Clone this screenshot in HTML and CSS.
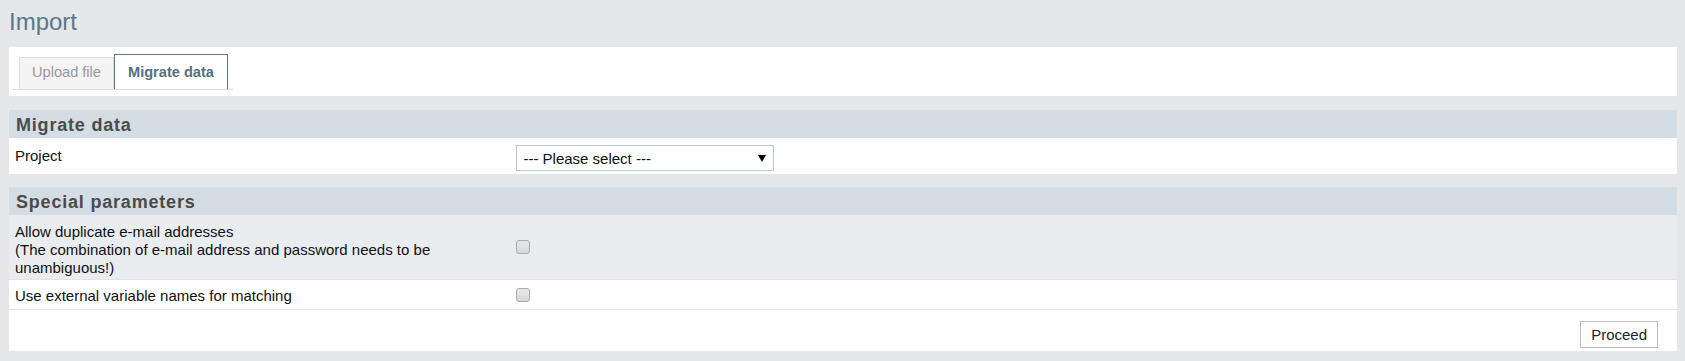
FILE: index.html
```html
<!DOCTYPE html>
<html lang="en">
<head>
<meta charset="utf-8">
<title>Import</title>
<link rel="stylesheet" href="styles.css">
</head>
<body>
<h1 class="page-title">Import</h1>

<div class="tab-panel">
  <div class="tab-list">
    <a class="tab">Upload file</a>
    <a class="tab tab-active">Migrate data</a>
  </div>
</div>

<section class="section">
  <h2 class="section-head">Migrate data</h2>
  <div class="row row-project">
    <div class="label">Project</div>
    <div class="value value-select">
      <span class="select-wrap">
        <select class="select">
          <option>--- Please select ---</option>
        </select>
      </span>
    </div>
  </div>
</section>

<section class="section section-special">
  <h2 class="section-head">Special parameters</h2>
  <div class="row row-dup">
    <div class="label label-multi">Allow duplicate e-mail addresses<br>(The combination of e-mail address and password needs to be unambiguous!)</div>
    <div class="value"><input type="checkbox" class="check"></div>
  </div>
  <div class="row row-ext">
    <div class="label label-single">Use external variable names for matching</div>
    <div class="value"><input type="checkbox" class="check"></div>
  </div>
  <div class="actions">
    <button class="button">Proceed</button>
  </div>
</section>
</body>
</html>
```

FILE: styles.css
```css
html, body {
  margin: 0;
  padding: 0;
}

body {
  background: #e6e7e9;
  padding: 8px 8px 0 9px;
  font-family: "Liberation Sans", Arial, sans-serif;
  font-size: 15px;
  color: #111;
}

.page-title {
  margin: 0;
  font-size: 24px;
  line-height: 28px;
  font-weight: normal;
  color: #5b7889;
}

.tab-panel {
  margin-top: 11px;
  background: #fff;
  padding: 7px 0 6px 3px;
}

.tab-list {
  display: inline-flex;
  align-items: flex-end;
  border-bottom: 1px solid #dddddd;
  padding: 0 5px 0 7px;
}

.tab {
  display: block;
  font-size: 14.6px;
  line-height: 18px;
  padding: 5px 12px 8px;
  background: #f4f4f4;
  border: 1px solid #dddddd;
  border-bottom: none;
  color: #999;
  cursor: pointer;
}

.tab-active {
  padding: 8px 13px 8px;
  background: #fff;
  border-color: #5b7b8d;
  color: #56707f;
  font-weight: bold;
}

.section {
  margin-top: 14px;
  background: #fff;
}

.section-special {
  margin-top: 13px;
}

.section-head {
  margin: 0;
  height: 28px;
  box-sizing: border-box;
  padding: 2px 7px 0;
  line-height: 26px;
  font-size: 18px;
  font-weight: bold;
  letter-spacing: 0.8px;
  color: #4b4b4b;
  background: #d3dde3;
}

.row {
  display: grid;
  grid-template-columns: 30% 1fr;
}

.label {
  display: flex;
  align-items: center;
  padding: 0 6px;
  line-height: 18px;
}

.value {
  display: flex;
  align-items: center;
  padding: 0 7px;
}

.row-project {
  height: 36px;
}

.value-select {
  align-items: flex-start;
  padding-top: 7px;
}

.select-wrap {
  position: relative;
  display: block;
}

.select-wrap::after {
  content: "";
  position: absolute;
  right: 8px;
  top: 10px;
  border-left: 4px solid transparent;
  border-right: 4px solid transparent;
  border-top: 7px solid #000;
  pointer-events: none;
}

.select {
  -webkit-appearance: none;
  appearance: none;
  display: block;
  width: 258px;
  height: 26px;
  margin: 0;
  padding: 0 24px 0 6px;
  border: 1px solid #b9cad6;
  border-radius: 0;
  background: #fff;
  font-family: "Liberation Sans", Arial, sans-serif;
  font-size: 15px;
  color: #111;
}

.row-dup {
  height: 65px;
  box-sizing: border-box;
  background: #e9edf0;
  border-bottom: 1px solid #dde4e9;
}

.label-multi {
  align-items: flex-start;
  padding-top: 8px;
}

.row-ext {
  height: 30px;
  box-sizing: border-box;
  border-bottom: 1px solid #e4e4e4;
}

.label-single {
  padding-top: 2px;
}

.check {
  -webkit-appearance: none;
  appearance: none;
  width: 14px;
  height: 14px;
  margin: 0;
  border: 1px solid #aaaaaa;
  border-radius: 3px;
  background: linear-gradient(#e9e9e9, #d7d7d7);
  box-sizing: border-box;
}

.actions {
  height: 41px;
  box-sizing: border-box;
  display: flex;
  justify-content: flex-end;
  align-items: flex-start;
  padding: 11px 19px 0 0;
}

.button {
  height: 27px;
  margin: 0;
  padding: 0 10px;
  border: 1px solid #bdbdbd;
  border-radius: 0;
  background: #fff;
  font-family: "Liberation Sans", Arial, sans-serif;
  font-size: 15px;
  color: #222;
}
```
